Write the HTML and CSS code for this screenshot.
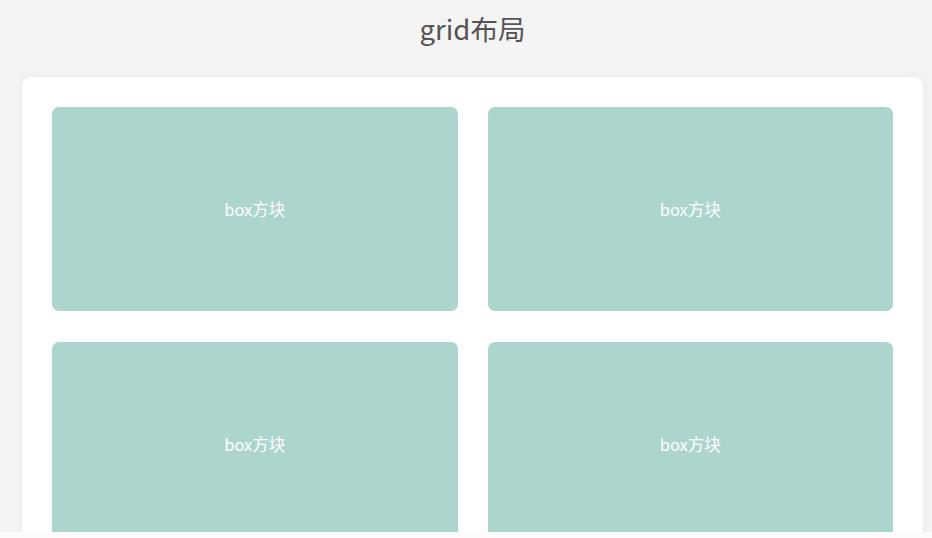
FILE: index.html
```html
<!DOCTYPE html>
<html lang="zh">
<head>
<meta charset="utf-8">
<title>grid布局</title>
<link rel="stylesheet" href="styles.css">
</head>
<body>
<div class="page">
  <h1 class="title">grid布局</h1>
  <div class="card">
    <div class="grid">
      <div class="box">box方块</div>
      <div class="box">box方块</div>
      <div class="box">box方块</div>
      <div class="box">box方块</div>
    </div>
  </div>
</div>
<div class="bottom-strip"></div>
</body>
</html>
```
FILE: styles.css
```css
html, body {
  margin: 0;
  padding: 0;
  background: #f4f4f4;
  height: 100%;
  overflow: hidden;
}
body {
  font-family: "Noto Sans CJK SC", "Noto Sans", sans-serif;
}
.page {
  padding: 0 9px 0 22px;
}
.title {
  margin: 0;
  height: 77px;
  padding-top: 10px;
  box-sizing: border-box;
  text-align: center;
  font-size: 27.5px;
  font-weight: 400;
  line-height: 36px;
  color: #555;
}
.card {
  background: #fff;
  border-radius: 9px;
  box-shadow: 0 0 12px rgba(0, 0, 0, 0.05);
  padding: 30px;
  height: 600px;
}
.grid {
  display: grid;
  grid-template-columns: 1fr 1fr;
  grid-auto-rows: 204px;
  gap: 31px 30px;
}
.box {
  background: #acd6cd;
  border-radius: 7px;
  color: #fff;
  font-size: 16.5px;
  display: flex;
  align-items: center;
  justify-content: center;
}
.bottom-strip {
  position: fixed;
  left: 0;
  right: 0;
  bottom: 0;
  height: 6px;
  background: #fbfbfb;
}
```
